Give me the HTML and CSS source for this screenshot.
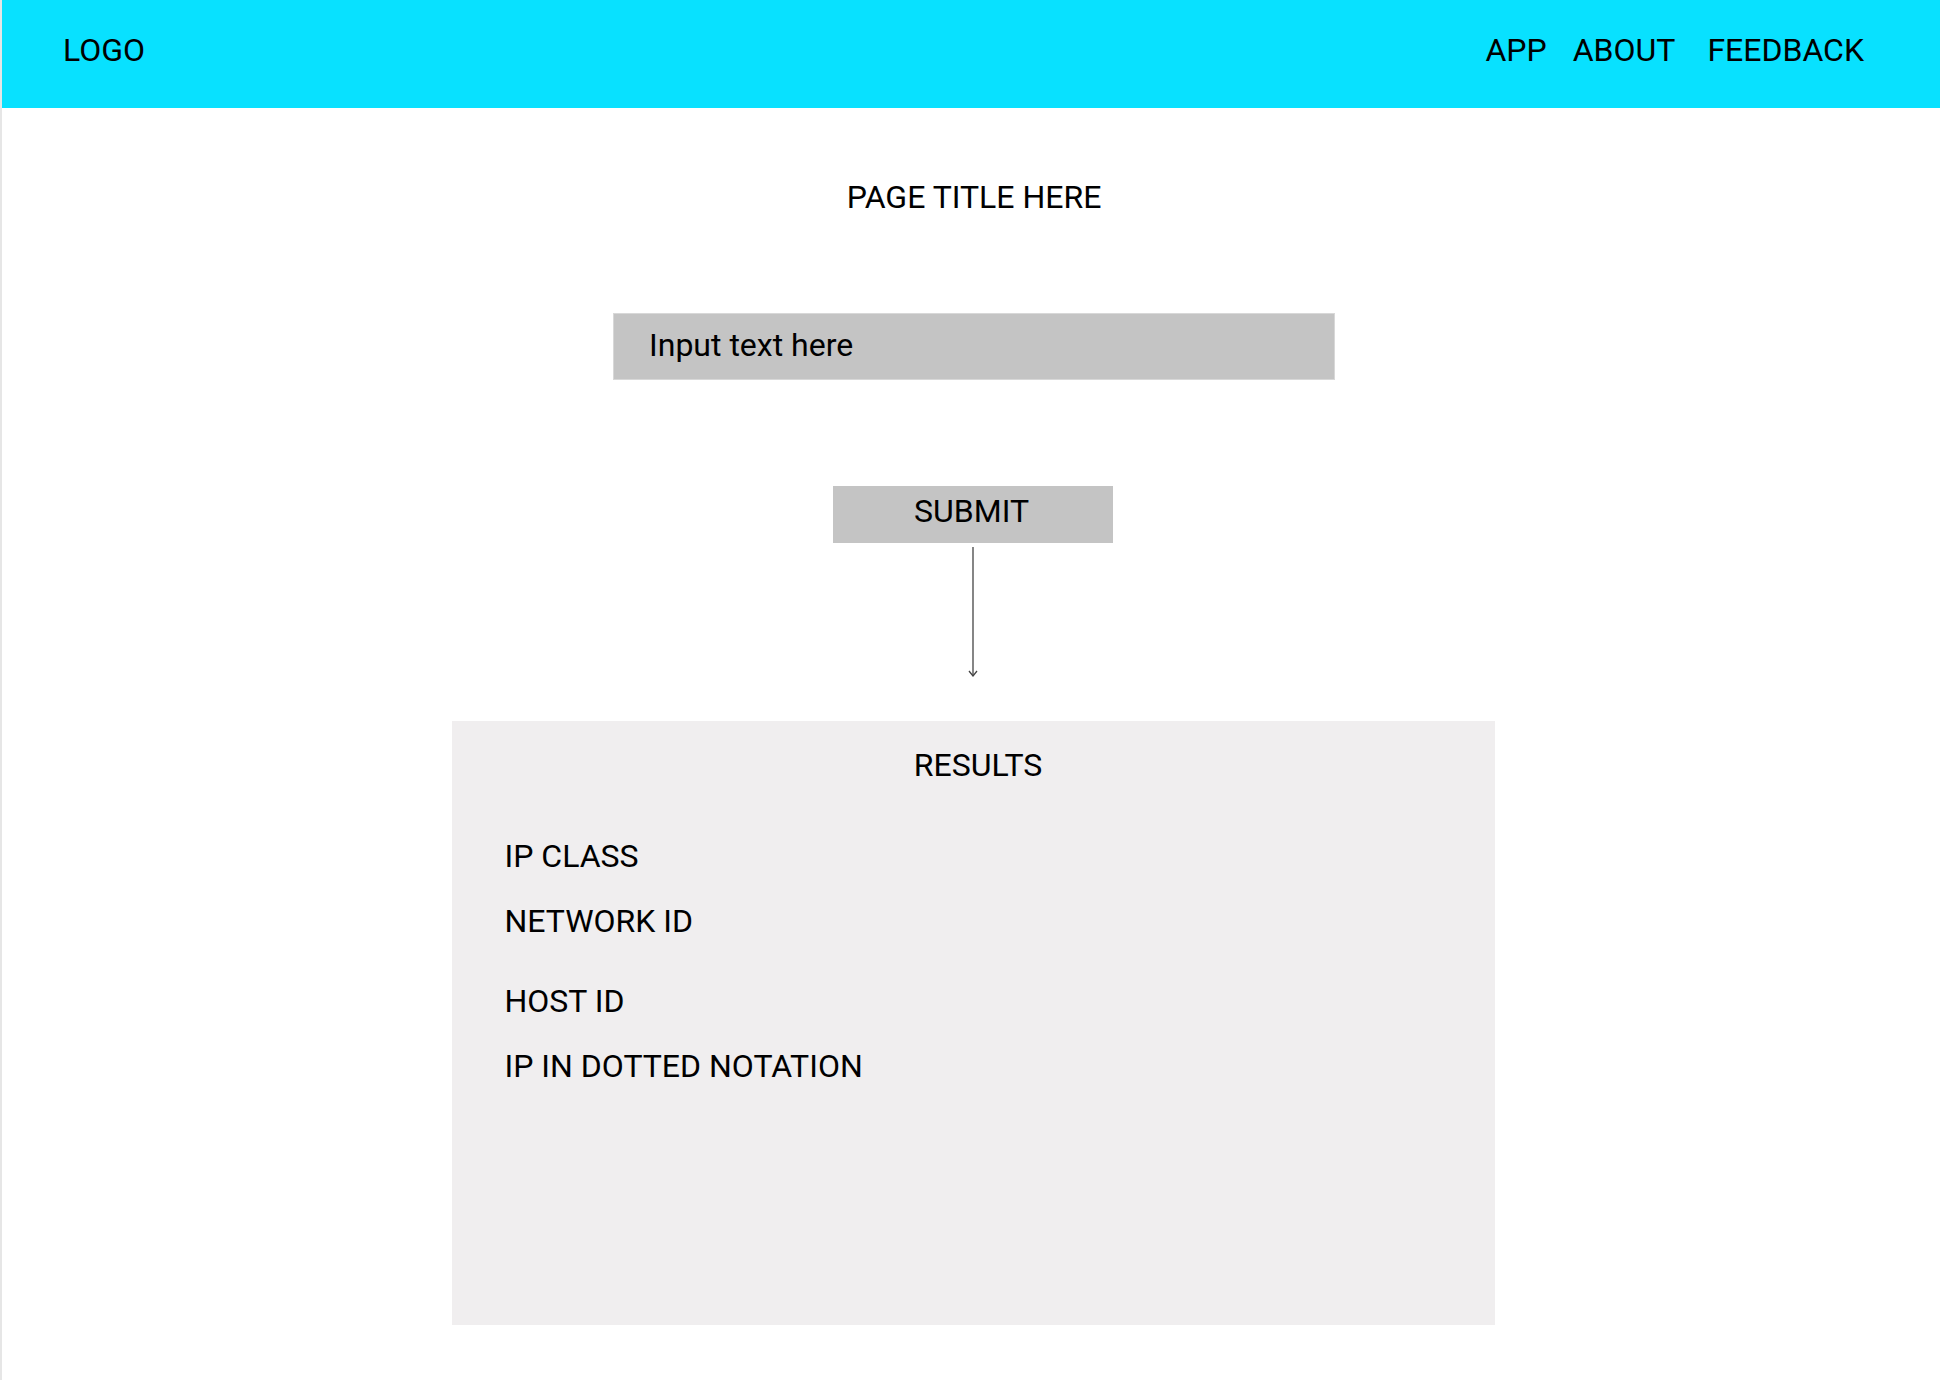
FILE: index.html
```html
<!DOCTYPE html>
<html lang="en">
<head>
<meta charset="utf-8">
<title>IP Calculator</title>
<link rel="stylesheet" href="styles.css">
</head>
<body>
<div class="page">
  <header class="topbar">
    <div class="logo">LOGO</div>
    <nav class="nav">
      <a class="nav-link" href="#">APP</a>
      <a class="nav-link nav-about" href="#">ABOUT</a>
      <a class="nav-link" href="#">FEEDBACK</a>
    </nav>
  </header>
  <main class="main">
    <h1 class="title">PAGE TITLE HERE</h1>
    <input class="ip-input" type="text" placeholder="Input text here">
    <button class="submit" type="button">SUBMIT</button>
    <svg class="arrow" width="10" height="130" viewBox="0 0 10 130" aria-hidden="true">
      <line x1="5" y1="0" x2="5" y2="129" stroke="#444" stroke-width="1.3"/>
      <polyline points="1,124 5,129 9,124" fill="none" stroke="#444" stroke-width="1.3"/>
    </svg>
    <section class="results">
      <h2 class="results-title">RESULTS</h2>
      <ul class="results-list">
        <li class="result-item">IP CLASS</li>
        <li class="result-item">NETWORK ID</li>
        <li class="result-item result-gap">HOST ID</li>
        <li class="result-item">IP IN DOTTED NOTATION</li>
      </ul>
    </section>
  </main>
</div>
</body>
</html>
```
FILE: styles.css
```css
html, body {
  margin: 0;
  padding: 0;
  background: #ffffff;
}

body {
  font-family: Roboto, "Liberation Sans", sans-serif;
  font-size: 32px;
  line-height: 38px;
  color: #000;
}

.page {
  border-left: 2px solid #e6e6e6;
  min-height: 1380px;
  box-sizing: border-box;
}

.topbar {
  height: 108px;
  box-sizing: border-box;
  background: #08e1ff;
  display: flex;
  justify-content: space-between;
  align-items: flex-start;
  padding: 31px 76px 0 61px;
}

.logo {
  font-size: 32px;
}

.nav {
  display: flex;
  gap: 26px;
}

.nav-link {
  color: #000;
  text-decoration: none;
}

.nav-about {
  margin-right: 6px;
}

.main {
  display: flex;
  flex-direction: column;
  align-items: center;
  padding: 70px 0 0 4px;
}

.title {
  margin: 0;
  font-size: 32px;
  font-weight: 400;
  line-height: 38px;
  padding-left: 2px;
}

.ip-input {
  margin-top: 97px;
  width: 722px;
  height: 67px;
  box-sizing: border-box;
  background: #c4c4c4;
  border: 1px solid #d8d8d8;
  padding: 0 0 3px 35px;
  font-family: Roboto, "Liberation Sans", sans-serif;
  font-size: 32px;
  color: #000;
  outline: none;
  margin-left: 2px;
}

.ip-input::placeholder {
  color: #000;
  opacity: 1;
}

.submit {
  margin-top: 106px;
  width: 280px;
  height: 57px;
  box-sizing: border-box;
  background: #c4c4c4;
  border: none;
  padding: 0 3px 7px 0;
  font-family: Roboto, "Liberation Sans", sans-serif;
  font-size: 32px;
  line-height: 38px;
  color: #000;
}

.arrow {
  display: block;
  margin-top: 4px;
}

.results {
  margin-top: 44px;
  width: 1043px;
  height: 604px;
  box-sizing: border-box;
  background: #f0eeef;
  padding: 25px 0 0 53px;
}

.results-title {
  margin: 0;
  font-size: 32px;
  font-weight: 400;
  line-height: 38px;
  text-align: center;
  padding-left: 10px;
  padding-right: 53px;
  box-sizing: border-box;
}

.results-list {
  list-style: none;
  margin: 53px 0 0 0;
  padding: 0;
  display: flex;
  flex-direction: column;
  gap: 27px;
}

.result-item {
  line-height: 38px;
}

.result-gap {
  margin-top: 15px;
}
```
